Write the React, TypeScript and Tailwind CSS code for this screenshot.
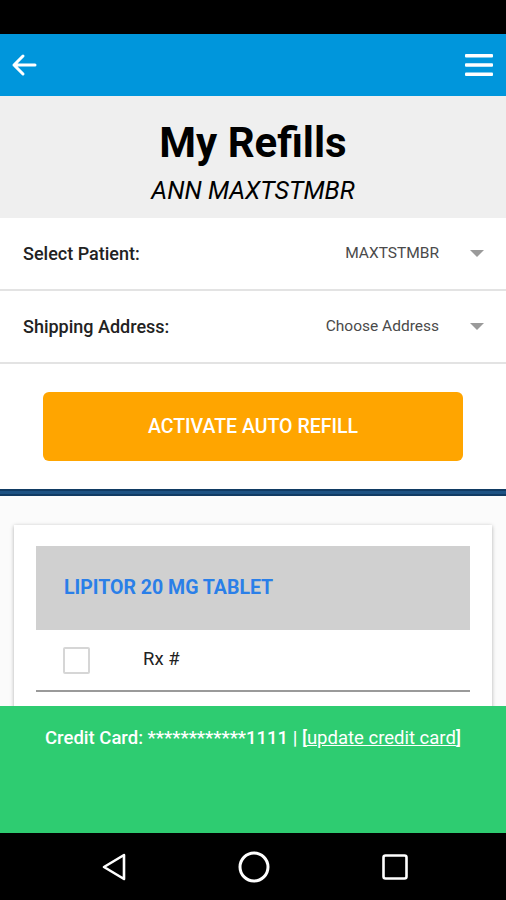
const Caret = () => (
  <svg width="14" height="8" viewBox="0 0 14 8" className="shrink-0">
    <path d="M0 0 L14 0 L7 7 Z" fill="#9a9a9a" />
  </svg>
);

const App = () => {
  const rows = [
    { label: "Select Patient:", value: "MAXTSTMBR" },
    { label: "Shipping Address:", value: "Choose Address" }
  ];

  return (
    <div className="w-[506px] h-[900px] flex flex-col overflow-hidden bg-white font-['Roboto',sans-serif]">
      {/* status bar */}
      <div className="h-[34px] bg-black shrink-0" />

      {/* app bar */}
      <div className="h-[62px] bg-[#0096dc] shrink-0 flex items-center justify-between pl-[11px] pr-[12px]">
        <svg width="26" height="24" viewBox="0 0 26 24">
          <path d="M24 12 H3 M12 3 L3 12 L12 21" fill="none" stroke="white" strokeWidth="3" strokeLinecap="round" strokeLinejoin="round" />
        </svg>
        <svg width="30" height="24" viewBox="0 0 30 24">
          <rect x="1" y="1" width="28" height="3.4" rx="1" fill="white" />
          <rect x="1" y="10.3" width="28" height="3.4" rx="1" fill="white" />
          <rect x="1" y="19.6" width="28" height="3.4" rx="1" fill="white" />
        </svg>
      </div>

      <div className="flex-1 overflow-hidden flex flex-col">
        {/* title */}
        <div className="h-[122px] bg-[#efefef] shrink-0 flex flex-col items-center pt-[22px]">
          <h1 className="text-[42px] leading-[50px] font-bold text-black">My Refills</h1>
          <p className="text-[25px] leading-[30px] italic text-black mt-[8px]">ANN MAXTSTMBR</p>
        </div>

        {rows.map((row) => (
          <div key={row.label} className="h-[73px] shrink-0 flex items-center border-b-2 border-[#e3e3e3] pl-[23px] pr-[22px]">
            <span className="text-[18px] font-medium text-[#222]">{row.label}</span>
            <span className="ml-auto text-[15.5px] text-[#4a4a4a] mr-[31px]">{row.value}</span>
            <Caret />
          </div>
        ))}

        <div className="shrink-0 px-[43px] pt-[28px] pb-[28px]">
          <button className="w-full h-[69px] bg-[#ffa500] rounded-[6px] text-white text-[19.5px] font-medium">
            ACTIVATE AUTO REFILL
          </button>
        </div>

        <div className="h-[7px] shrink-0 bg-[#1d5283] border-y-2 border-[#113b63]" />

        <div className="flex-1 bg-[#fbfbfb] px-[14px] pt-[29px]">
          <div className="bg-white shadow-[0_1px_4px_rgba(0,0,0,0.3)] px-[22px] pt-[21px] pb-[20px]">
            <div className="h-[84px] bg-[#d0d0d0] flex items-center pl-[28px]">
              <span className="text-[19.5px] font-bold text-[#2a7fe8]">LIPITOR 20 MG TABLET</span>
            </div>
            <div className="h-[62px] flex items-center border-b-2 border-[#9a9a9a]">
              <div className="w-[27px] h-[27px] border-2 border-[#d6d6d6] rounded-[2px] ml-[27px]" />
              <span className="ml-[53px] text-[18.5px] text-[#222]">Rx #</span>
            </div>
            <div className="h-[60px]" />
          </div>
        </div>
      </div>

      {/* credit card bar */}
      <div className="h-[127px] shrink-0 bg-[#2ecc71] flex justify-center pt-[20px]">
        <p className="text-[18.5px] font-medium text-white leading-[24px]">
          Credit Card: ************1111 | [<span className="underline font-normal">update credit card</span>]
        </p>
      </div>

      {/* nav bar */}
      <div className="h-[67px] shrink-0 bg-black flex items-center justify-center gap-[112px] pl-[4px]">
        <svg width="24" height="28" viewBox="0 0 24 28">
          <path d="M22 2 L2 14 L22 26 Z" fill="none" stroke="white" strokeWidth="2.6" strokeLinejoin="round" />
        </svg>
        <svg width="32" height="32" viewBox="0 0 32 32">
          <circle cx="16" cy="16" r="14" fill="none" stroke="white" strokeWidth="3" />
        </svg>
        <svg width="26" height="26" viewBox="0 0 26 26">
          <rect x="1.5" y="1.5" width="23" height="23" rx="2" fill="none" stroke="white" strokeWidth="2.6" />
        </svg>
      </div>
    </div>
  );
};

export default App;
